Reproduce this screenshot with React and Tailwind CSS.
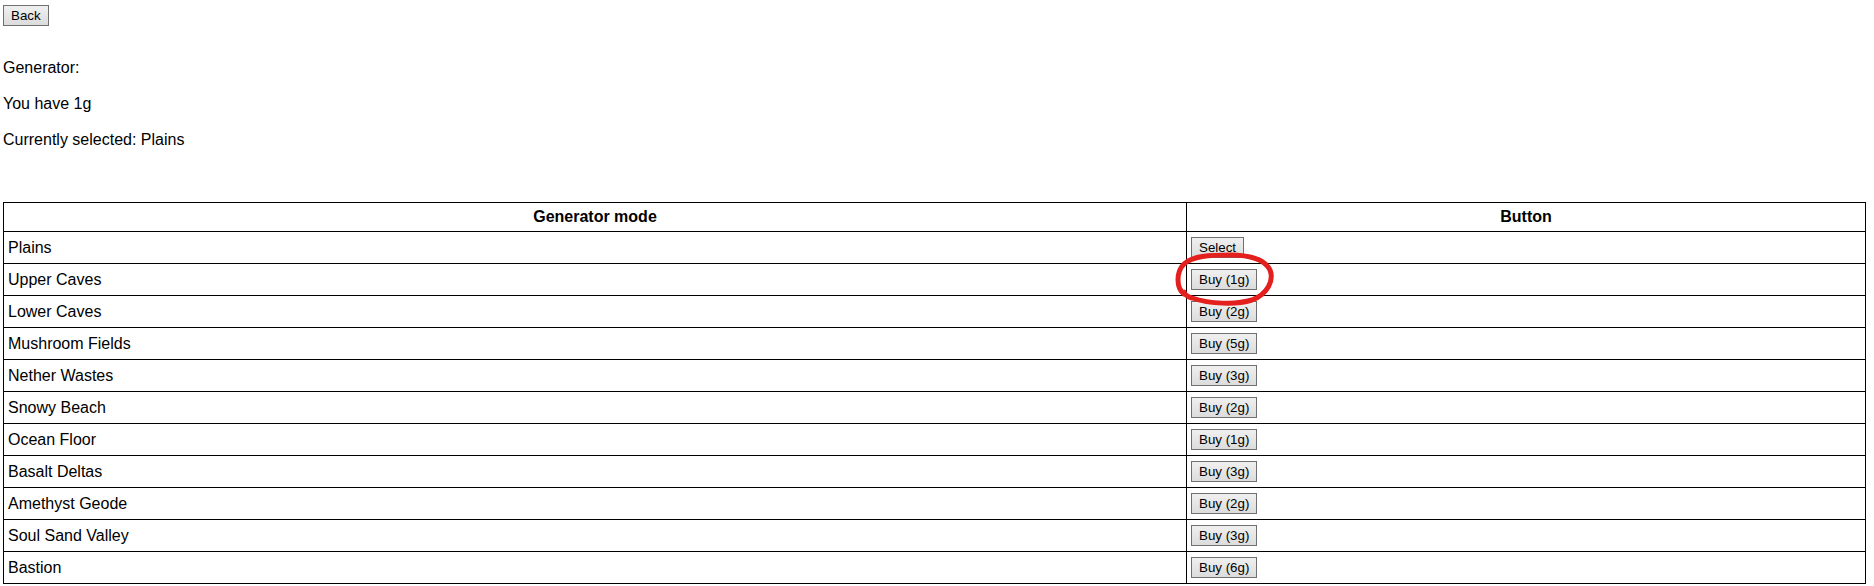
import React from "react";

const rows = [
  ["Plains", "Select"],
  ["Upper Caves", "Buy (1g)"],
  ["Lower Caves", "Buy (2g)"],
  ["Mushroom Fields", "Buy (5g)"],
  ["Nether Wastes", "Buy (3g)"],
  ["Snowy Beach", "Buy (2g)"],
  ["Ocean Floor", "Buy (1g)"],
  ["Basalt Deltas", "Buy (3g)"],
  ["Amethyst Geode", "Buy (2g)"],
  ["Soul Sand Valley", "Buy (3g)"],
  ["Bastion", "Buy (6g)"],
];

function Btn({ children }) {
  return (
    <button className="block h-[21px] px-[7px] border border-[#707070] bg-linear-to-b from-[#f0f0f0] to-[#dcdcdc] text-[13.33px] leading-[15px] text-black font-['Liberation_Sans',Arial,sans-serif]">
      {children}
    </button>
  );
}

export default function App() {
  return (
    <div className="w-[1874px] h-[586px] bg-white text-black font-['Liberation_Sans',Arial,sans-serif] pl-[3px] pt-[5px] overflow-hidden flex flex-col items-start">
      <Btn>Back</Btn>
      <p className="mt-[33px] text-[16px] leading-[18px]">Generator:</p>
      <p className="mt-[18px] text-[16px] leading-[18px]">You have 1g</p>
      <p className="mt-[18px] text-[16px] leading-[18px]">Currently selected: Plains</p>
      <div className="relative mt-[53px] w-[1863px]">
        <table className="w-[1863px] border-collapse text-[16px] leading-[18px] table-fixed">
          <colgroup>
            <col className="w-[1183px]" />
            <col />
          </colgroup>
          <thead>
            <tr>
              <th className="border border-black font-bold p-0">
                <div className="h-[28px] flex items-center justify-center px-[4px]">Generator mode</div>
              </th>
              <th className="border border-black font-bold p-0">
                <div className="h-[28px] flex items-center justify-center px-[4px]">Button</div>
              </th>
            </tr>
          </thead>
          <tbody>
            {rows.map(([name, label]) => (
              <tr key={name}>
                <td className="border border-black p-0">
                  <div className="h-[31px] flex items-center px-[4px]">{name}</div>
                </td>
                <td className="border border-black p-0">
                  <div className="h-[31px] flex items-center px-[4px]">
                    <Btn>{label}</Btn>
                  </div>
                </td>
              </tr>
            ))}
          </tbody>
        </table>
        <svg
          className="absolute left-[1167px] top-[46px] pointer-events-none"
          width="110"
          height="62"
          viewBox="0 0 110 62"
          fill="none"
        >
          <path
            d="M 14 46 C 6 40, 6 24, 14 16 C 22 8, 40 7, 60 7 C 80 7, 95 12, 100 22 C 104 32, 98 46, 82 52 C 66 57, 40 56, 22 50 C 18 49, 15 47, 14 44"
            stroke="#e3201d"
            strokeWidth="5"
            strokeLinecap="round"
            strokeLinejoin="round"
          />
        </svg>
      </div>
    </div>
  );
}
